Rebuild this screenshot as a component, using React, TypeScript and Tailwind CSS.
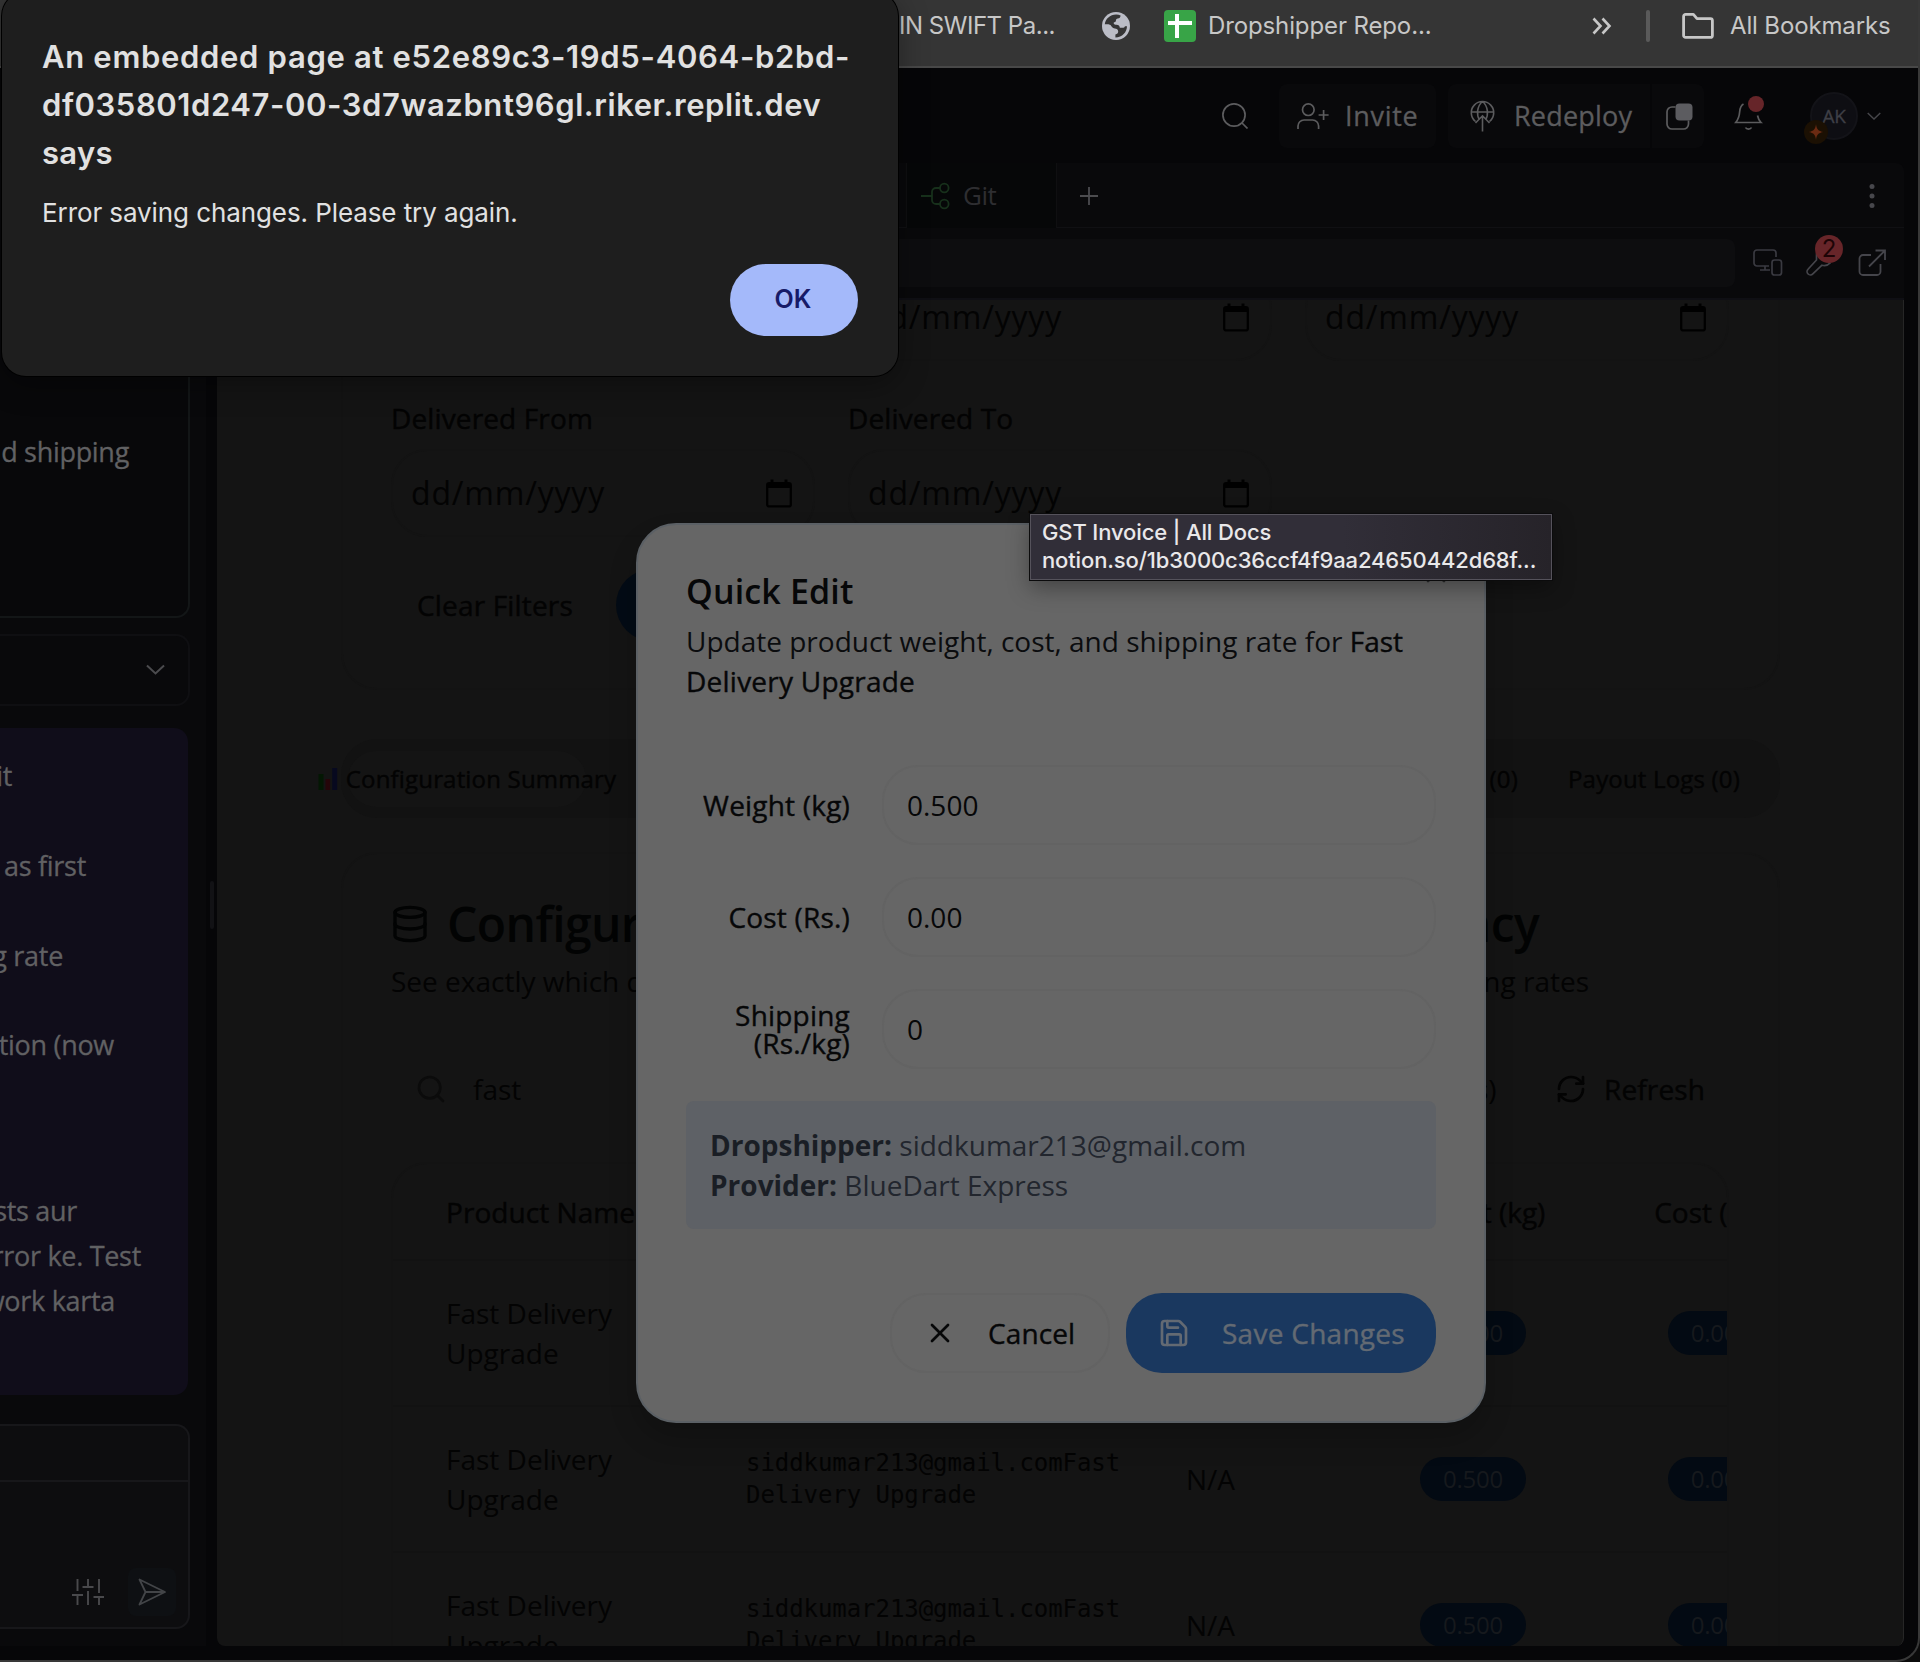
import type { ReactNode } from "react";
import { Database, RefreshCw, Save, Search, X } from "lucide-react";

const INTER = "font-['Inter',sans-serif]";
const SANS = "font-['Open_Sans','Noto_Sans',sans-serif]";
const MEDIUM = "[-webkit-text-stroke:0.4px_currentColor]";
const SEMI_MEDIUM = "[-webkit-text-stroke:0.3px_currentColor]";

/* ---------- Icons ---------- */

function Globe() {
  return (
    <svg width="28" height="28" viewBox="0 0 28 28">
      <circle cx="14" cy="14" r="14" fill="#bbbdc6" />
      <path
        d="M14.2 2.6c1.8 0 3.2.3 4.4.9-.2 1.8-1 2.9-2.8 3-1.300.1-1.900.9-1.900 2.300 0 .9-.7 1.400-1.500 1.500-.8.1-.9.8-.5 1.500.5.9 1.200 1 2.600 1 2 0 3.300 1.200 3.300 2.900h2.600c1.400 0 2.300-.3 2.500-1.500h2.100c-.2 6-4.700 11-11.600 11.200v-3c1.800-.2 2.800-1.200 2.800-2.800 0-2-1.500-3-3.400-3.100-2.700-.1-3.300-2.200-4.300-3.400-.9-.9-2.500-.9-5.700-.9C3.300 7.200 8 2.600 14.200 2.600Z"
        fill="#353535"
      />
    </svg>
  );
}

function SheetIcon() {
  return (
    <svg width="32" height="32" viewBox="0 0 32 32">
      <rect width="32" height="32" rx="4" fill="#38a447" />
      <path d="M4 11h24v4H4zM11 4h4v24h-4z" fill="#fff" />
    </svg>
  );
}

function FolderIcon() {
  return (
    <svg width="32" height="26" viewBox="0 0 32 26" fill="none" stroke="#c7c7c7" strokeWidth="2.8" strokeLinejoin="round">
      <path d="M1.600 3.400a2 2 0 0 1 2-2h7.800l3.600 4.200h13.400a2 2 0 0 1 2 2v14.800a2 2 0 0 1-2 2H3.600a2 2 0 0 1-2-2Z" />
    </svg>
  );
}

function DoubleChevron() {
  return (
    <svg width="20" height="18" viewBox="0 0 20 18" fill="none" stroke="#c7c7c7" strokeWidth="2.600">
      <path d="m1.500 1.500 7 7.500-7 7.500M10.500 1.500l7 7.500-7 7.500" />
    </svg>
  );
}

function SearchThin() {
  return (
    <svg width="26" height="26" viewBox="0 0 26 26" fill="none" stroke="#5c5c5e" strokeWidth="1.700">
      <circle cx="12" cy="12" r="11.100" />
      <path d="m20 20 5.500 5.500" />
    </svg>
  );
}

function UserPlus() {
  return (
    <svg width="32" height="27" viewBox="0 0 32 27" fill="none" stroke="#5c5c5e" strokeWidth="1.700">
      <circle cx="11.300" cy="6.700" r="5.800" />
      <path d="M1 26v-3a6 6 0 0 1 6-6h8.600a6 6 0 0 1 6 6v3M26.600 7v10M21.600 12h10" />
    </svg>
  );
}

function DeployIcon() {
  return (
    <svg width="25" height="32" viewBox="0 0 25 32" fill="none" stroke="#5c5c5e" strokeWidth="1.600">
      <path d="M5.500 21.500a11.200 11.200 0 1 1 14 0M1.300 12h22.400M12.500 1.500c-6 5-6 14-3 18.500M12.500 1.500c6 5 6 14 3 18.500M12.500 16v15.500M5.500 23l7-7.200 7 7.200" />
    </svg>
  );
}

function LayersIcon() {
  return (
    <svg width="27" height="27" viewBox="0 0 27 27" fill="none">
      <path d="M9.500 4H6a5 5 0 0 0-5 5v12a5 5 0 0 0 5 5h11.500a5 5 0 0 0 5-5v-3.500" stroke="#5c5c5e" strokeWidth="1.700" />
      <rect x="9.500" y="0.500" width="17" height="17" rx="4" fill="#5c5c60" />
    </svg>
  );
}

function BellIcon() {
  return (
    <svg width="30" height="36" viewBox="0 0 30 36" fill="none" stroke="#5c5c5e" strokeWidth="1.700">
      <path d="M9.500 9c-2.500 1.500-3.500 4-3.800 7.500-.3 4-1 7.500-4 11h25.300c-2-2-3-4.500-3.500-7M11.500 32.500c1 2.200 5 2.200 6 0" />
      <circle cx="22" cy="9" r="8" fill="#662529" stroke="none" />
    </svg>
  );
}

function ChevronDown({ w, color }: { w: number; color: string }) {
  return (
    <svg width={w} height={w * 0.6} viewBox="0 0 20 12" fill="none" stroke={color} strokeWidth="2.100">
      <path d="m1 1.500 9 8.500 9-8.500" />
    </svg>
  );
}

function GitIcon() {
  return (
    <svg width="30" height="28" viewBox="0 0 30 28" fill="none" stroke="#17301b" strokeWidth="1.800">
      <circle cx="24.300" cy="6" r="4.300" />
      <circle cx="24.300" cy="22" r="4.300" />
      <path d="M1 14h11M20 6h-4a4 4 0 0 0-4 4v8a4 4 0 0 0 4 4h4" />
    </svg>
  );
}

function DevicesIcon() {
  return (
    <svg width="30" height="28" viewBox="0 0 30 28" fill="none" stroke="#3a3a41" strokeWidth="1.700">
      <path d="M16 17H4a3 3 0 0 1-3-3V4a3 3 0 0 1 3-3h16a3 3 0 0 1 3 3v4M12 17v4M7 21h10" />
      <rect x="19" y="11" width="9.500" height="15" rx="2.500" />
    </svg>
  );
}

function WrenchIcon() {
  return (
    <svg width="28" height="28" viewBox="0 0 28 28" fill="none" stroke="#45454b" strokeWidth="1.700" strokeLinejoin="round">
      <path d="M10.500 4.500v6.500L2 20.300a3.300 3.300 0 0 0 4.800 4.600l9.200-8.700c3.500.9 6 .2 8.500-2.500" />
    </svg>
  );
}

function ExternalIcon() {
  return (
    <svg width="28" height="28" viewBox="0 0 28 28" fill="none" stroke="#45454b" strokeWidth="1.800">
      <path d="M13 6H5a3.500 3.500 0 0 0-3.500 3.500v13A3.500 3.500 0 0 0 5 26h14a3.500 3.500 0 0 0 3.500-3.500V15M17.500 1.500H27V11M26.500 2 11 17.500" />
    </svg>
  );
}

function SlidersIcon() {
  return (
    <svg width="32" height="28" viewBox="0 0 32 28" fill="none" stroke="#49494c" strokeWidth="1.900">
      <path d="M5.500 1v12M0 17h11M5.500 17v10M16 1v8M10.500 9h11M16 13v14M27 1v14M21.500 19h10.500M27 19v8" />
    </svg>
  );
}

function SendIcon() {
  return (
    <svg width="29" height="28" viewBox="0 0 29 28" fill="none" stroke="#434548" strokeWidth="1.800" strokeLinejoin="round">
      <path d="M1.500 1.500 27 14 1.500 26.500 7.500 14ZM7.500 14H27" />
    </svg>
  );
}

function CalendarIcon() {
  return (
    <svg width="26" height="29" viewBox="0 0 26 29" fill="none">
      <rect x="1.200" y="4.200" width="23.600" height="23.200" rx="2" stroke="#000" strokeWidth="2.300" />
      <path d="M1 4h24v5H1zM4.500 0.500h3v4h-3zM18.500 0.500h3v4h-3z" fill="#000" />
    </svg>
  );
}

function ChartIcon() {
  return (
    <svg className="shrink-0" width="20" height="24" viewBox="0 0 20 24">
      <path d="M0.500 7h5v16h-5z" fill="#031703" />
      <path d="M7.500 12h4.600v11H7.500z" fill="#250509" />
      <path d="M14.200 1h5v22h-5z" fill="#07091f" />
    </svg>
  );
}

/* ---------- Browser chrome and workspace header ---------- */

function BookmarksBar() {
  return (
    <div className={`${INTER} flex h-[68px] shrink-0 items-center border-b-2 border-[#484848] bg-[#353535] pb-[14px] pl-[899px] text-[24px] leading-[32px] whitespace-nowrap text-[#c7c7c7]`}>
      <span className="w-[203px] tracking-[-0.48px]">IN SWIFT Pa...</span>
      <Globe />
      <div className="w-[34px]" />
      <SheetIcon />
      <span className="ml-3 w-[384px] tracking-[-0.12px]">Dropshipper Repo...</span>
      <DoubleChevron />
      <div className="ml-[34px] h-8 w-1 rounded-full bg-[#5a5a5a]" />
      <div className="ml-8">
        <FolderIcon />
      </div>
      <span className="ml-4 tracking-[-0.14px]">All Bookmarks</span>
    </div>
  );
}

function WorkspaceHeader() {
  return (
    <div className={`${SANS} ${SEMI_MEDIUM} flex h-[95px] shrink-0 items-center bg-[#060608] pt-[1px] pl-[1222px] text-[27px] text-[#5c5c5e]`}>
      <SearchThin />
      <div className="ml-[31px] flex h-16 w-[157px] items-center rounded-lg bg-[#09090b] pl-[18px]">
        <UserPlus />
        <span className="ml-4 tracking-[0.7px]">Invite</span>
      </div>
      <div className="ml-3 flex h-16 w-[202px] items-center rounded-l-lg bg-[#09090b] pl-[22px]">
        <DeployIcon />
        <span className="ml-[19px] tracking-[0.2px]">Redeploy</span>
      </div>
      <div className="ml-[2px] flex h-16 w-[52px] items-center justify-center rounded-r-lg bg-[#09090b] pl-[2px]">
        <LayersIcon />
      </div>
      <div className="mb-[6px] ml-[30px]">
        <BellIcon />
      </div>
      <div className="relative ml-[46px] flex h-12 w-12 items-center justify-center rounded-full border-2 border-[#131318] bg-[#0e0e13] text-[19px] tracking-[-0.3px] text-[#3e3f46]">
        AK
        <div className="absolute -bottom-[6px] -left-[8px] flex h-6 w-6 items-center justify-center rounded-full bg-[#1b1003]">
          <svg width="18" height="18" viewBox="0 0 18 18">
            <path d="M9 1c.6 5 2 7.200 7.500 8C11 9.800 9.600 12 9 17 8.400 12 7 9.800 1.500 9 7 8.200 8.400 6 9 1Z" fill="#6b2a12" />
          </svg>
        </div>
      </div>
      <div className="ml-[9px]">
        <ChevronDown w={14} color="#46464a" />
      </div>
    </div>
  );
}

function TabBar() {
  return (
    <div className={`${SANS} flex h-[65px] shrink-0 rounded-tr-lg border-b border-[#101013] bg-[#09090b]`}>
      <div className="ml-[689px] flex h-[65px] w-[151px] items-center border-x border-[#0f0f11] bg-[#060708] pl-[13px] text-[26px] tracking-[-0.5px] text-[#2e2e31]">
        <GitIcon />
        <span className="ml-[13px]">Git</span>
      </div>
      <svg className="mt-6 ml-[23px]" width="18" height="18" viewBox="0 0 18 18" stroke="#4c4c4f" strokeWidth="1.800">
        <path d="M9 0v18M0 9h18" />
      </svg>
      <svg className="mt-5 ml-auto mr-[29px]" width="6" height="26" viewBox="0 0 6 26" fill="#47474c">
        <circle cx="3" cy="3.500" r="2.500" />
        <circle cx="3" cy="13" r="2.500" />
        <circle cx="3" cy="22.500" r="2.500" />
      </svg>
    </div>
  );
}

function AddressRow() {
  return (
    <div className="flex h-[72px] shrink-0 items-center border-b-2 border-[#0f0f14] bg-[#09090b]">
      <div className="ml-2 h-12 w-[1510px] rounded-lg bg-[#0d0d0f]" />
      <div className="ml-[18px]">
        <DevicesIcon />
      </div>
      <div className="relative ml-[23px]">
        <WrenchIcon />
        <div className={`${INTER} absolute -top-[14px] left-[9px] flex h-7 w-7 items-center justify-center rounded-full bg-[#672529] text-[24px] text-[#1d0406]`}>2</div>
      </div>
      <div className="ml-[24px]">
        <ExternalIcon />
      </div>
    </div>
  );
}

/* ---------- Chat panel ---------- */

function ChatLine({ children, gap }: { children: ReactNode; gap: string }) {
  return (
    <div className={`${gap} h-[45px] leading-[45px]`}>
      <div className="flex justify-end">
        <span>{children}</span>
      </div>
    </div>
  );
}

function ChatPanel() {
  return (
    <div className={`${SANS} ${SEMI_MEDIUM} flex w-[206px] shrink-0 flex-col overflow-hidden bg-[#09090b] text-[27px] tracking-[-0.3px] whitespace-nowrap text-[#616163]`}>
      <div className="h-[455px] w-[190px] shrink-0 rounded-br-[14px] border-r-2 border-b-2 border-[#131617] bg-[#08080a] pt-[266px]">
        <ChatLine gap="pr-[59px]">d shipping</ChatLine>
      </div>
      <div className="mt-4 flex h-[72px] w-[190px] shrink-0 items-center justify-end rounded-r-[14px] border-2 border-l-0 border-[#0f0f12] pr-[23px]">
        <ChevronDown w={19} color="#4b4b4e" />
      </div>
      <div className="mt-[22px] h-[667px] w-[188px] shrink-0 rounded-r-[14px] bg-[#100d1a] pt-[25px]">
        <ChatLine gap="pr-[176px]">it</ChatLine>
        <ChatLine gap="mt-[45px] pr-[102px]">as first</ChatLine>
        <ChatLine gap="mt-[45px] pr-[125px]">g rate</ChatLine>
        <ChatLine gap="mt-[44px] pr-[74px]">tion (now</ChatLine>
        <ChatLine gap="mt-[121px] pr-[111px]">sts aur</ChatLine>
        <ChatLine gap="pr-[47px]">rror ke. Test</ChatLine>
        <ChatLine gap="pr-[73px]">work karta</ChatLine>
      </div>
      <div className="mt-[29px] flex h-[205px] w-[190px] shrink-0 flex-col rounded-r-[14px] border-2 border-l-0 border-[#17171a] bg-[#0d0d0f]">
        <div className="h-[56px] border-b-2 border-[#17171a]" />
        <div className="mt-[86px] flex items-center pl-[72px]">
          <SlidersIcon />
          <div className="ml-6 flex h-12 w-12 items-center justify-center rounded-lg bg-[#0e1013]">
            <SendIcon />
          </div>
        </div>
      </div>
    </div>
  );
}

/* ---------- Previewed page ---------- */

function DateField() {
  return (
    <div className="flex h-[88px] w-[424px] items-center justify-between rounded-[36px] border-2 border-[#131313] pr-[21px] pl-[18px] text-[32px]">
      <span className="tracking-[0.8px]">dd/mm/yyyy</span>
      <CalendarIcon />
    </div>
  );
}

function Pill({ children, w }: { children: string; w: string }) {
  return <div className={`${w} flex h-11 items-center justify-center rounded-[22px] bg-[#030a13] text-[24px] tracking-[-0.2px] text-[#16191d]`}>{children}</div>;
}

const COLUMNS = "grid w-[1400px] grid-cols-[300px_440px_214px_146px_108px_120px] items-center pl-[53px]";

function ProductRow() {
  return (
    <div className={`${COLUMNS} h-[146px] border-t-2 border-[#121212]`}>
      <div className="leading-[40px]">
        Fast Delivery
        <br />
        Upgrade
      </div>
      <div className="font-['DejaVu_Sans_Mono',monospace] text-[24px] leading-[32px] tracking-[-0.06px]">
        siddkumar213@gmail.comFast
        <br />
        Delivery Upgrade
      </div>
      <div>N/A</div>
      <div className="flex justify-center">
        <Pill w="w-[106px]">0.500</Pill>
      </div>
      <div />
      <div className="flex justify-center">
        <Pill w="w-[93px]">0.00</Pill>
      </div>
    </div>
  );
}

function PreviewPage() {
  return (
    <div className={`${SANS} h-[1346px] shrink-0 overflow-hidden rounded-b-lg border-r border-[#262626] bg-[#141414] pl-[124px] text-[28px] whitespace-nowrap text-[#030303]`}>
      <div className="flex h-[390px] w-[1439px] flex-col rounded-b-[36px] border-2 border-t-0 border-[#131313] pl-[48px]">
        <div className="-mt-[27px] flex gap-[33px]">
          <DateField />
          <DateField />
          <DateField />
        </div>
        <div className={`${MEDIUM} mt-[26px] flex gap-[33px] leading-[62px] tracking-[0.13px]`}>
          <span className="w-[424px]">Delivered From</span>
          <span>Delivered To</span>
        </div>
        <div className="flex gap-[33px]">
          <DateField />
          <DateField />
        </div>
        <div className={`${MEDIUM} mt-[32px] flex items-center tracking-[0.17px]`}>
          <span className="ml-[26px] w-[199px]">Clear Filters</span>
          <div className="h-[72px] w-[240px] rounded-[36px] bg-[#030b15]" />
        </div>
      </div>

      <div className={`${MEDIUM} mt-[49px] flex h-[79px] w-[1439px] shrink-0 items-center justify-between rounded-[36px] bg-[#121212] pr-[40px] pl-[7px] text-[24px] tracking-[0.18px]`}>
        <div className="flex h-14 w-[238px] items-center justify-center rounded-[28px] bg-[#141414]">
          <ChartIcon />
          <span className="ml-2">Configuration Summary</span>
        </div>
        <div className="flex gap-[50px]">
          <span>(0)</span>
          <span>Payout Logs (0)</span>
        </div>
      </div>

      <div className="mt-[34px] h-[900px] w-[1439px] rounded-t-[36px] border-2 border-[#131313] pt-[46px] pl-[48px]">
        <div className="flex h-12 w-[1148px] items-center text-[48px] leading-[48px] font-semibold tracking-[-0.6px] text-[#020303]">
          <Database size={40} strokeWidth={2} className="-ml-px" />
          <span className="ml-[17px]">Configur</span>
          <span className="ml-auto">ncy</span>
        </div>
        <div className="mt-[13px] flex h-10 w-[1198px] justify-between leading-[40px]">
          <span>See exactly which d</span>
          <span>ng rates</span>
        </div>
        <div className="mt-12 flex h-20 items-center">
          <Search size={32} strokeWidth={2} className="ml-[24px] text-[#0b0b0b]" />
          <span className="ml-[26px] w-[1002px]">fast</span>
          <span className="w-[80px]">s)</span>
          <RefreshCw size={32} strokeWidth={2} />
          <span className={`${MEDIUM} ml-[17px] tracking-[0.13px]`}>Refresh</span>
        </div>
        <div className="mt-[33px] h-[700px] w-[1338px] overflow-hidden rounded-t-[36px] border-2 border-[#131313]">
          <div className={`${COLUMNS} ${MEDIUM} h-[95px]`}>
            <span className="tracking-[0.05px]">Product Name</span>
            <span />
            <span />
            <span className="text-center">Weight (kg)</span>
            <span />
            <span className="text-center">Cost (Rs.)</span>
          </div>
          <ProductRow />
          <ProductRow />
          <ProductRow />
        </div>
      </div>
    </div>
  );
}

/* ---------- Overlays ---------- */

function FormRow({ label, value }: { label: ReactNode; value: string }) {
  return (
    <div className="mb-8 flex h-20 items-center">
      <div className={`${MEDIUM} w-[164px] text-right leading-[28px] tracking-[0.2px]`}>{label}</div>
      <div className="ml-[32px] flex h-20 flex-1 items-center rounded-[36px] border-2 border-[#636363] pl-[23px]">{value}</div>
    </div>
  );
}

function QuickEditDialog() {
  return (
    <div className={`${SANS} absolute top-[523px] left-[636px] h-[900px] w-[850px] rounded-[40px] border-2 border-[#5b6065] bg-[#666666] pt-[48px] pr-[48px] pl-[48px] text-[28px] whitespace-nowrap text-[#060708] shadow-[0_16px_28px_rgba(0,0,0,0.2)]`}>
      <X size={32} className="absolute top-[32px] right-[32px] text-[#2c2d2e]" />
      <div className="text-[34px] leading-[36px] font-semibold tracking-[0.15px]">Quick Edit</div>
      <div className="mt-3 leading-[40px] text-[#0b0c0e]">
        Update product weight, cost, and shipping rate for <span className={`${MEDIUM} text-[#060708]`}>Fast</span>
        <br />
        <span className={`${MEDIUM} tracking-[0.24px] text-[#060708]`}>Delivery Upgrade</span>
      </div>
      <div className="mt-[64px]">
        <FormRow label="Weight (kg)" value="0.500" />
        <FormRow label="Cost (Rs.)" value="0.00" />
        <FormRow
          label={
            <>
              Shipping
              <br />
              (Rs./kg)
            </>
          }
          value="0"
        />
      </div>
      <div className="h-[128px] rounded-lg bg-[#5e6166] px-6 py-6 leading-[40px] text-[#22262e]">
        <div>
          <b className="text-[#1a1e25]">Dropshipper:</b> siddkumar213@gmail.com
        </div>
        <div>
          <b className="text-[#1a1e25]">Provider:</b> BlueDart Express
        </div>
      </div>
      <div className={`${MEDIUM} mt-16 flex justify-end gap-4`}>
        <div className="flex h-20 w-[220px] items-center rounded-[36px] border-2 border-[#636363] pl-8">
          <X size={32} strokeWidth={2} />
          <span className="ml-[32px] tracking-[0.1px]">Cancel</span>
        </div>
        <div className="flex h-20 w-[310px] items-center rounded-[36px] bg-[#1a385f] pl-8 tracking-[0.27px] text-[#636a73]">
          <Save size={32} strokeWidth={2} />
          <span className="ml-[32px]">Save Changes</span>
        </div>
      </div>
    </div>
  );
}

function LinkTooltip() {
  return (
    <div className={`${INTER} absolute top-[514px] left-[1030px] h-[66px] w-[522px] border border-[#55525b] bg-gradient-to-r from-[#312e38] from-60% to-[#262329] pt-[3px] pl-[11px] text-[22px] leading-[28px] font-medium tracking-[-0.13px] whitespace-nowrap text-[#e9e8ea] shadow-[0_0_0_1px_#0b0b0c,0_8px_22px_rgba(0,0,0,0.35)]`}>
      <div>GST Invoice | All Docs</div>
      <div>notion.so/1b3000c36ccf4f9aa24650442d68f...</div>
    </div>
  );
}

function AlertDialog() {
  return (
    <div className={`${INTER} absolute -top-2 left-[2px] h-[384px] w-[896px] rounded-[24px] bg-[#1e1e1e] pt-[41px] pl-10 whitespace-nowrap text-[#e1e1e1] shadow-[0_0_0_1px_#000,0_8px_30px_rgba(0,0,0,0.35)]`}>
      <div className="text-[31px] leading-[48px] font-semibold">
        <div className="tracking-[0.68px]">An embedded page at e52e89c3-19d5-4064-b2bd-</div>
        <div className="tracking-[0.57px]">df035801d247-00-3d7wazbnt96gl.riker.replit.dev</div>
        <div className="tracking-[0.3px]">says</div>
      </div>
      <div className="mt-4 text-[26px] leading-[40px] tracking-[-0.09px]">Error saving changes. Please try again.</div>
      <div className="mt-[31px] mr-10 ml-auto flex h-[72px] w-[128px] items-center justify-center rounded-full bg-[#a4b9fa] pr-[2px] text-[25px] font-semibold text-[#171b68]">OK</div>
    </div>
  );
}

export default function App() {
  return (
    <div className="relative h-[1662px] w-[1920px] overflow-hidden bg-[#0b0b0b]">
      <div className="flex h-[1662px] w-[1920px] flex-col overflow-hidden rounded-br-[24px] border-r-2 border-b-2 border-[#383838] bg-[#060608]">
        <BookmarksBar />
        <WorkspaceHeader />
        <div className="flex h-[1483px] shrink-0">
          <ChatPanel />
          <div className="flex w-[11px] items-start justify-center pt-[718px]">
            <div className="h-12 w-1 rounded-full bg-[#121215]" />
          </div>
          <div className="flex w-[1687px] flex-col">
            <TabBar />
            <AddressRow />
            <PreviewPage />
          </div>
        </div>
      </div>
      <QuickEditDialog />
      <AlertDialog />
      <LinkTooltip />
    </div>
  );
}
